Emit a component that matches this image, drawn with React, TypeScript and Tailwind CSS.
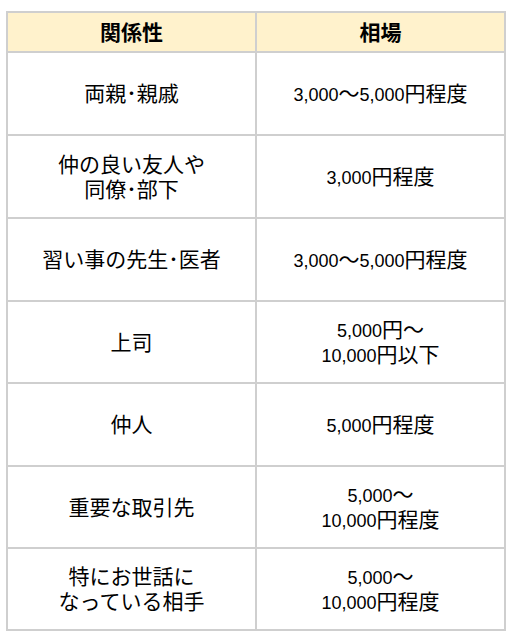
const rows = [
  { who: ["両親･親戚"], price: ["3,000～5,000円程度"], h: "h-[81px]" },
  { who: ["仲の良い友人や", "同僚･部下"], price: ["3,000円程度"], h: "h-[81px]" },
  { who: ["習い事の先生･医者"], price: ["3,000～5,000円程度"], h: "h-[81px]" },
  { who: ["上司"], price: ["5,000円～", "10,000円以下"], h: "h-[80px]" },
  { who: ["仲人"], price: ["5,000円程度"], h: "h-[81px]" },
  { who: ["重要な取引先"], price: ["5,000～", "10,000円程度"], h: "h-[80px]" },
  { who: ["特にお世話に", "なっている相手"], price: ["5,000～", "10,000円程度"], h: "h-[80px]" },
];

// latin digits are smaller than the kanji in the original, so split the runs
const Mixed = ({ text }: { text: string }) => {
  const parts = text.match(/[\x00-\x7F]+|[^\x00-\x7F]+/g) || [];
  return (
    <>
      {parts.map((p, i) =>
        /^[\x00-\x7F]+$/.test(p) ? (
          <span key={i} className="text-[18px] font-['Liberation_Sans',sans-serif]">
            {p}
          </span>
        ) : (
          <span key={i} className="text-[21px] font-['Noto_Sans_CJK_JP',sans-serif]">
            {p}
          </span>
        )
      )}
    </>
  );
};

const Lines = ({ lines }: { lines: string[] }) => (
  <>
    {lines.map((l, i) => (
      <span key={i} className="block leading-[22px]">
        <Mixed text={l} />
      </span>
    ))}
  </>
);

const App = () => {
  return (
    <div className="min-h-[636px] bg-white pt-[11px] pl-[6px]">
      <div className="w-[500px] border-2 border-[#cfcfcf] text-black">
        <div className="flex h-[38px] bg-[#fff2cc] font-bold">
          <div className="w-[249px] border-r-2 border-[#cfcfcf] flex items-center justify-center">
            <Lines lines={["関係性"]} />
          </div>
          <div className="flex-1 flex items-center justify-center">
            <Lines lines={["相場"]} />
          </div>
        </div>
        {rows.map((r, i) => (
          <div key={i} className={`flex border-t-2 border-[#cfcfcf] box-content ${r.h}`}>
            <div className="w-[249px] border-r-2 border-[#cfcfcf] flex flex-col items-center justify-center text-center">
              <Lines lines={r.who} />
            </div>
            <div className="flex-1 flex flex-col items-center justify-center text-center">
              <Lines lines={r.price} />
            </div>
          </div>
        ))}
      </div>
    </div>
  );
};

export default App;
